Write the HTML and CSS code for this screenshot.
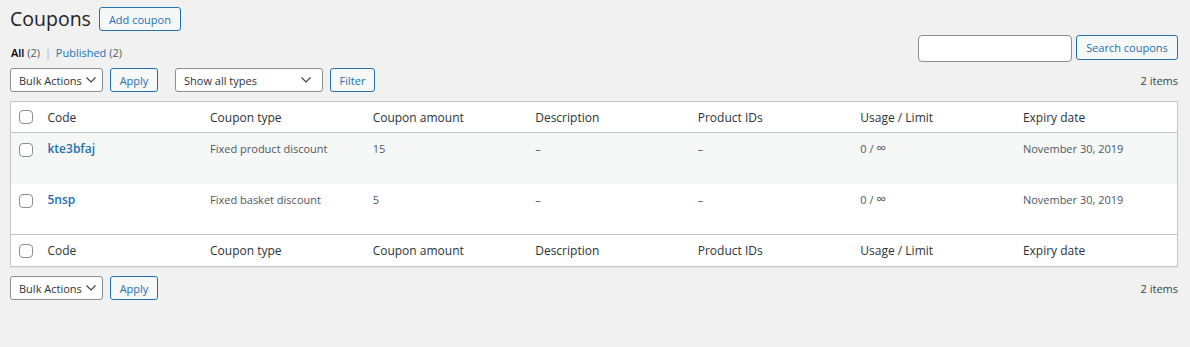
FILE: index.html
```html
<!DOCTYPE html>
<html>
<head>
<meta charset="utf-8">
<link rel="stylesheet" href="styles.css">
</head>
<body>
<div class="wrap">
  <div class="titlebar">
    <h1 class="title">Coupons</h1>
    <span class="btn btn-title">Add coupon</span>
  </div>
  <div class="toprow">
    <div class="subsubsub">
      <span class="current">All</span> <span class="count">(2)</span> <span class="sep">|</span> <span class="link">Published</span> <span class="count">(2)</span>
    </div>
    <div class="searchbox">
      <span class="input"></span>
      <span class="btn btn-search">Search coupons</span>
    </div>
  </div>
  <div class="tablenav">
    <div class="actions">
      <span class="select sel-bulk">Bulk Actions<svg class="chev" viewBox="0 0 10 6" width="10" height="6"><path d="M0.5 0.5 L5 5 L9.5 0.5" fill="none" stroke="#3c434a" stroke-width="1.2"/></svg></span>
      <span class="btn btn-apply">Apply</span>
      <span class="select sel-types">Show all types<svg class="chev" viewBox="0 0 10 6" width="10" height="6"><path d="M0.5 0.5 L5 5 L9.5 0.5" fill="none" stroke="#3c434a" stroke-width="1.2"/></svg></span>
      <span class="btn btn-filter">Filter</span>
    </div>
    <div class="items">2 items</div>
  </div>
  <table class="list">
    <colgroup>
      <col class="c-check"><col><col><col><col><col><col><col>
    </colgroup>
    <thead>
      <tr>
        <th class="check"><span class="cb"></span></th>
        <th>Code</th><th>Coupon type</th><th>Coupon amount</th><th>Description</th><th>Product IDs</th><th>Usage / Limit</th><th>Expiry date</th>
      </tr>
    </thead>
    <tbody>
      <tr class="alt">
        <td class="check"><span class="cb"></span></td>
        <td><span class="code">kte3bfaj</span></td><td>Fixed product discount</td><td>15</td><td>–</td><td>–</td><td>0 / <span class="inf">∞</span></td><td>November 30, 2019</td>
      </tr>
      <tr>
        <td class="check"><span class="cb"></span></td>
        <td><span class="code">5nsp</span></td><td>Fixed basket discount</td><td>5</td><td>–</td><td>–</td><td>0 / <span class="inf">∞</span></td><td>November 30, 2019</td>
      </tr>
    </tbody>
    <tfoot>
      <tr>
        <th class="check"><span class="cb"></span></th>
        <th>Code</th><th>Coupon type</th><th>Coupon amount</th><th>Description</th><th>Product IDs</th><th>Usage / Limit</th><th>Expiry date</th>
      </tr>
    </tfoot>
  </table>
  <div class="tablenav bottom">
    <div class="actions">
      <span class="select sel-bulk">Bulk Actions<svg class="chev" viewBox="0 0 10 6" width="10" height="6"><path d="M0.5 0.5 L5 5 L9.5 0.5" fill="none" stroke="#3c434a" stroke-width="1.2"/></svg></span>
      <span class="btn btn-apply">Apply</span>
    </div>
    <div class="items">2 items</div>
  </div>
</div>
</body>
</html>
```
FILE: styles.css
```css
html, body {
  margin: 0;
  padding: 0;
  background: #f1f1f1;
}
body {
  font-family: "Open Sans", "Noto Sans", sans-serif;
  font-size: 11px;
  color: #3c434a;
  height: 347px;
  overflow: hidden;
}
.wrap {
  padding: 0 12px 0 10px;
}
.titlebar {
  display: flex;
  align-items: center;
  padding-top: 7px;
  height: 24px;
}
.title {
  margin: 0;
  font-size: 19.5px;
  font-weight: 400;
  line-height: 24px;
  color: #1d2327;
}
.btn {
  display: inline-flex;
  align-items: center;
  justify-content: center;
  box-sizing: border-box;
  height: 24px;
  border: 1px solid #2271b1;
  border-radius: 3px;
  background: #f6f7f7;
  color: #2271b1;
  font-size: 11px;
  padding: 0;
  white-space: nowrap;
}
.btn-title {
  margin-left: 8px;
  width: 82px;
}
.toprow {
  display: flex;
  justify-content: space-between;
  align-items: flex-end;
  margin-top: 4px;
  height: 26px;
}
.subsubsub {
  line-height: 16px;
  font-size: 11px;
  color: #50575e;
  padding-left: 1px;
}
.subsubsub .current { color: #000; font-weight: 600; }
.subsubsub .link { color: #2271b1; }
.subsubsub .sep { color: #a7aaad; padding: 0 2px; }
.searchbox {
  display: flex;
  align-items: flex-start;
  align-self: flex-start;
  gap: 4px;
}
.input {
  display: block;
  box-sizing: border-box;
  width: 154px;
  height: 27px;
  background: #fff;
  border: 1px solid #8c8f94;
  border-radius: 4px;
}
.btn-search {
  width: 102px;
  height: 25px;
}
.tablenav {
  display: flex;
  justify-content: space-between;
  align-items: center;
  margin-top: 7px;
  height: 24px;
}
.tablenav.bottom {
  margin-top: 9px;
}
.actions {
  display: flex;
  align-items: center;
}
.select {
  display: inline-flex;
  align-items: center;
  justify-content: space-between;
  box-sizing: border-box;
  height: 24px;
  padding: 0 6px 0 8px;
  background: #fff;
  border: 1px solid #8c8f94;
  border-radius: 3px;
  color: #2c3338;
  font-size: 11px;
  white-space: nowrap;
}
.chev { display: block; }
.sel-bulk { width: 93px; }
.sel-types { width: 148px; margin-left: 17px; padding-right: 11px; }
.btn-apply { width: 48px; margin-left: 7px; }
.btn-filter { width: 45px; margin-left: 7px; }
.items {
  color: #3c434a;
  font-size: 11px;
}
.list {
  width: 100%;
  margin-top: 9px;
  border-collapse: collapse;
  table-layout: fixed;
  background: #fff;
  border: 1px solid #c3c4c7;
  box-shadow: 0 1px 1px rgba(0,0,0,.04);
}
.c-check { width: 29px; }
.list th, .list td {
  text-align: left;
  vertical-align: top;
  padding: 0 8px;
  white-space: nowrap;
}
.list th {
  font-weight: 400;
  font-size: 12px;
  color: #2c3338;
  height: 30px;
  vertical-align: middle;
}
.list tfoot th { height: 31px; }
.list thead tr { border-bottom: 1px solid #c3c4c7; }
.list tfoot tr { border-top: 1px solid #c3c4c7; }
.list td {
  height: 51px;
  padding-top: 7px;
  box-sizing: border-box;
  font-size: 11px;
  line-height: 18px;
  color: #50575e;
}
.inf { font-size: 14px; line-height: 10px; }
.list tr.alt td { background: #f6f7f7; }
.list .check { padding: 0 0 0 8px; }
.list td.check { padding-top: 10px; }
.cb {
  display: block;
  box-sizing: border-box;
  width: 14px;
  height: 14px;
  border: 1px solid #8c8f94;
  border-radius: 4px;
  background: #fff;
}
.code {
  color: #2271b1;
  font-weight: 600;
  font-size: 12px;
}
```
